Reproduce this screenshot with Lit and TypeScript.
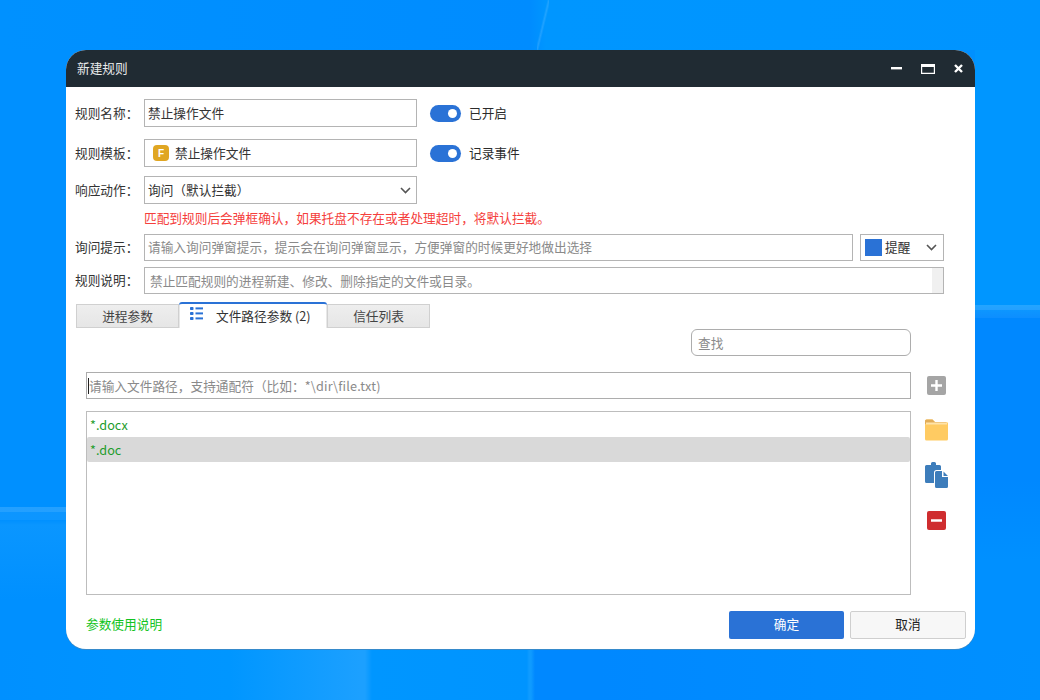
import {LitElement, html, css} from 'lit';
import {customElement} from 'lit/decorators.js';

@customElement('app-root')
export class AppRoot extends LitElement {
  static styles = css`
    :host {
      display: block;
      width: 1040px;
      height: 700px;
      overflow: hidden;
      font-family: "Noto Sans CJK SC", "Liberation Sans", sans-serif;
      font-size: 12.7px;
      color: #2b2b2b;
      /* wallpaper: only the strips around the dialog show, so each is its own layer */
      background:
        linear-gradient(to bottom right, transparent 42%, rgba(255,255,255,.13) 50%, transparent 58%) 537px 0 / 12px 50px no-repeat,
        linear-gradient(rgba(255,255,255,.14), rgba(255,255,255,.14)) 0 507px / 66px 5px no-repeat,
        linear-gradient(rgba(255,255,255,.05), rgba(255,255,255,.05)) 0 512px / 66px 8px no-repeat,
        linear-gradient(rgba(255,255,255,.14), rgba(255,255,255,.14)) 975px 305px / 65px 5px no-repeat,
        linear-gradient(rgba(255,255,255,.05), rgba(255,255,255,.05)) 975px 310px / 65px 8px no-repeat,
        linear-gradient(90deg, #0091ff 0, #008cff 530px, #0096ff 546px, #0094ff 100%) 0 0 / 100% 50px no-repeat,
        linear-gradient(90deg, #0090ff 0, #0096ff 230px, #1ca0ff 360px, #1ca0ff 365px, #0096ff 372px, #0094ff 527px, #0f9bff 529px, #0f9bff 531px, #0088ff 535px, #0088ff 600px, #0090ff 100%) 0 650px / 100% 50px no-repeat,
        linear-gradient(180deg, #0096ff 0, #0096ff 305px, #0088ff 318px, #0088ff 480px, #0090ff 560px, #0090ff 100%) 975px 0 / 65px 100% no-repeat,
        linear-gradient(180deg, #0090ff 0, #0090ff 520px, #0a96ff 525px, #0090ff 600px);
    }
    .desk {
      box-sizing: border-box;
      height: 700px;
      padding: 50px 65px 51px 66px;
    }
    .win {
      height: 599px;
      background: #fff;
      border-radius: 20px;
      overflow: hidden;
      display: flex;
      flex-direction: column;
      box-shadow: 0 1px 0 rgba(120, 130, 140, .45);
    }
    .title {
      flex: none;
      height: 37px;
      background: #202b33;
      color: #e8eaeb;
      display: flex;
      align-items: center;
      padding: 0 12px 0 11px;
      gap: 19px;
    }
    .title span { flex: 1; padding-bottom: 2px; }
    .title svg { display: block; }
    .body {
      flex: 1;
      padding: 12px 0 0 9px;
      display: flex;
      flex-direction: column;
    }
    .row {
      display: flex;
      align-items: center;
      height: 28px;
    }
    .lab { width: 69px; flex: none; color: #333; padding-bottom: 2px; }
    .txt { padding-bottom: 2px; }
    .field {
      box-sizing: border-box;
      height: 100%;
      border: 1px solid #b4b4b4;
      background: #fff;
      display: flex;
      align-items: center;
      padding: 0 3px 2px;
      color: #333;
    }
    .w273 { width: 273px; }
    .toggle {
      box-sizing: border-box;
      width: 31px;
      height: 17px;
      border-radius: 9px;
      background: #2a72d6;
      margin: 0 8px 0 13px;
      display: flex;
      justify-content: flex-end;
      align-items: center;
      padding-right: 4px;
    }
    .toggle i { width: 9px; height: 9px; border-radius: 50%; background: #fff; }
    .badge {
      width: 16px;
      height: 16px;
      border-radius: 4px;
      background: #e0a622;
      color: #fff;
      font: bold 10px "Liberation Sans", sans-serif;
      display: flex;
      align-items: center;
      justify-content: center;
      margin: 2px 6px 0 5px;
    }
    .chev { margin-left: auto; margin-right: 2px; margin-top: 2px; }
    .warn { color: #f5403c; margin: 5px 0 8px 69px; height: 17px; line-height: 17px; }
    .ph { color: #8a8a8a; }
    .h27 { height: 27px; }
    .sel { width: 84px; margin-left: 7px; flex: none; padding: 0 4px 2px; }
    .swatch { width: 17px; height: 17px; background: #2a72d6; margin: 2px 3px 0 0; }
    .desc { width: 800px; padding: 0 0 0 5px; }
    .bar { margin-left: auto; width: 11px; height: 100%; background: #f0f0f0; }
    .tabs { display: flex; margin: 10px 0 0 1px; height: 24px; align-items: flex-end; }
    .tab {
      box-sizing: border-box;
      width: 103px;
      height: 24px;
      padding-bottom: 2px;
      background: linear-gradient(#eeeeee, #e6e6e6);
      border: 1px solid #d0d0d0;
      color: #444;
      display: flex;
      align-items: center;
      justify-content: center;
    }
    .tab.on {
      width: 148px;
      height: 26px;
      background: #fff;
      border: none;
      border-top: 2px solid #2a72d6;
      border-radius: 3px 3px 0 0;
      color: #333;
      box-shadow: inset 1px 0 #e8e8e8, inset -1px 0 #e8e8e8;
      justify-content: flex-start;
      gap: 13px;
      padding: 0 0 2px 11px;
    }
    .tab.on svg { margin-top: -3px; }
    .find {
      box-sizing: border-box;
      align-self: flex-start;
      margin: 1px 0 0 616px;
      width: 220px;
      height: 27px;
      border: 1px solid #adadad;
      border-radius: 6px;
      padding: 0 6px;
      display: flex;
      align-items: center;
      color: #8a8a8a;
    }
    .main {
      margin: 16px 0 0 11px;
      display: grid;
      grid-template-columns: 825px 38px;
      grid-template-rows: 27px 184px;
      row-gap: 12px;
    }
    .path {
      color: #8a8a8a;
      padding: 0 2px 0 1px;
      border-color: #adadad;
    }
    .path b { font-weight: normal; letter-spacing: .2px; }
    .caret { width: 1px; height: 16px; background: #222; }
    .tools { display: flex; flex-direction: column; align-items: center; }
    .tools.one { justify-content: center; padding-left: 12px; }
    .tools.col { padding: 8px 0 0 12px; }
    .copy { margin-top: 21px; }
    .minus { margin-top: 23px; }
    .list {
      box-sizing: border-box;
      border: 1px solid #bdbdbd;
    }
    .item {
      height: 25px;
      line-height: 26px;
      padding-left: 3px;
      color: #1d9c2c;
    }
    .item.on { background: #d9d9d9; border-radius: 2px; }
    .foot {
      display: flex;
      align-items: center;
      margin: 16px 0 0 11px;
      height: 28px;
    }
    .link { color: #12c322; width: 643px; padding-bottom: 3px; }
    .btn {
      box-sizing: border-box;
      height: 28px;
      width: 115px;
      padding-bottom: 3px;
      display: flex;
      align-items: center;
      justify-content: center;
      border-radius: 2px;
    }
    .ok { background: #2a72d6; color: #fff; }
    .cancel {
      width: 116px;
      margin-left: 6px;
      background: #f7f7f7;
      border: 1px solid #cfcfcf;
      color: #222;
    }
  `;

  chev() {
    return html`<svg class="chev" width="11" height="7" viewBox="0 0 11 7"><path d="M1 1l4.500 4.500L10 1" fill="none" stroke="#555" stroke-width="1.6"/></svg>`;
  }

  render() {
    return html`
      <div class="desk">
        <div class="win">
          <div class="title">
            <span>新建规则</span>
            <svg width="11" height="11" viewBox="0 0 11 11"><rect x="0" y="4" width="11" height="2.4" fill="#fff"/></svg>
            <svg width="14" height="10" viewBox="0 0 14 10"><path d="M.6.6h12.800v8.800H.6z" fill="none" stroke="#fff" stroke-width="1.2"/><rect x="0" y="0" width="14" height="3" fill="#fff"/></svg>
            <svg width="9" height="9" viewBox="0 0 9 9"><path d="M1 1l7 7M8 1L1 8" stroke="#fff" stroke-width="2.4"/></svg>
          </div>
          <div class="body">
            <div class="row">
              <div class="lab">规则名称：</div>
              <div class="field w273">禁止操作文件</div>
              <div class="toggle"><i></i></div><span class="txt">已开启</span>
            </div>
            <div class="row" style="margin-top:12px">
              <div class="lab">规则模板：</div>
              <div class="field w273"><span class="badge">F</span>禁止操作文件</div>
              <div class="toggle"><i></i></div><span class="txt">记录事件</span>
            </div>
            <div class="row" style="margin-top:9px">
              <div class="lab">响应动作：</div>
              <div class="field w273">询问（默认拦截）${this.chev()}</div>
            </div>
            <div class="warn">匹配到规则后会弹框确认，如果托盘不存在或者处理超时，将默认拦截。</div>
            <div class="row h27">
              <div class="lab">询问提示：</div>
              <div class="field ph" style="width:709px">请输入询问弹窗提示，提示会在询问弹窗显示，方便弹窗的时候更好地做出选择</div>
              <div class="field sel"><span class="swatch"></span>提醒${this.chev()}</div>
            </div>
            <div class="row h27" style="margin-top:6px">
              <div class="lab">规则说明：</div>
              <div class="field desc ph">禁止匹配规则的进程新建、修改、删除指定的文件或目录。<span class="bar"></span></div>
            </div>
            <div class="tabs">
              <div class="tab">进程参数</div>
              <div class="tab on">
                <svg width="13" height="13" viewBox="0 0 13 13" fill="#2a72d6"><rect y="0" width="3.500" height="3" rx=".8"/><rect y="5" width="3.500" height="3" rx=".8"/><rect y="10" width="3.500" height="3" rx=".8"/><rect x="5.500" y=".4" width="7.500" height="2"/><rect x="5.500" y="5.400" width="7.500" height="2"/><rect x="5.500" y="10.400" width="7.500" height="2"/></svg>
                <span>文件路径参数 (2)</span>
              </div>
              <div class="tab">信任列表</div>
            </div>
            <div class="find">查找</div>
            <div class="main">
              <div class="field path"><span class="caret"></span>请输入文件路径，支持通配符（比如：<b>*\\dir\\file.txt)</b></div>
              <div class="tools one">
                <svg width="19" height="19" viewBox="0 0 19 19"><rect width="19" height="19" rx="2" fill="#a5a5a5"/><path d="M9.500 4v11M4 9.500h11" stroke="#fff" stroke-width="2.400"/></svg>
              </div>
              <div class="list">
                <div class="item">*.docx</div>
                <div class="item on">*.doc</div>
              </div>
              <div class="tools col">
                <svg width="23" height="22" viewBox="0 0 23 22"><path d="M0 2a1.500 1.500 0 0 1 1.500-1.500h6L10 3h11.500A1.500 1.500 0 0 1 23 4.500V20a1.500 1.500 0 0 1-1.500 1.500h-20A1.500 1.500 0 0 1 0 20z" fill="#ffcb62"/><path d="M0 2a1.500 1.500 0 0 1 1.500-1.500h6L10 3h11v2H0z" fill="#e2ad58"/><rect x="1" y="3.500" width="21" height="2" fill="#ffe3a8"/></svg>
                <svg class="copy" width="23" height="26" viewBox="0 0 23 26"><path d="M1.500 3H6V1.500A1.500 1.500 0 0 1 7.500 0h2A1.500 1.500 0 0 1 11 1.500V3h3.500A1.500 1.500 0 0 1 16 4.500V8h-4.500A2.500 2.500 0 0 0 9 10.500V21H1.500A1.500 1.500 0 0 1 0 19.500v-15A1.500 1.500 0 0 1 1.500 3z" fill="#3d7dbb"/><path d="M11.500 9H17v6h6v9.500a1.500 1.500 0 0 1-1.500 1.500h-10a1.500 1.500 0 0 1-1.500-1.500v-14A1.500 1.500 0 0 1 11.500 9zM18.500 9.500L23 14h-4.500z" fill="#3d7dbb"/></svg>
                <svg class="minus" width="19" height="19" viewBox="0 0 19 19"><rect width="19" height="19" rx="2" fill="#cf2d2f"/><path d="M4 9.500h11" stroke="#fff" stroke-width="2.600"/></svg>
              </div>
            </div>
            <div class="foot">
              <div class="link">参数使用说明</div>
              <div class="btn ok">确定</div>
              <div class="btn cancel">取消</div>
            </div>
          </div>
        </div>
      </div>
    `;
  }
}
